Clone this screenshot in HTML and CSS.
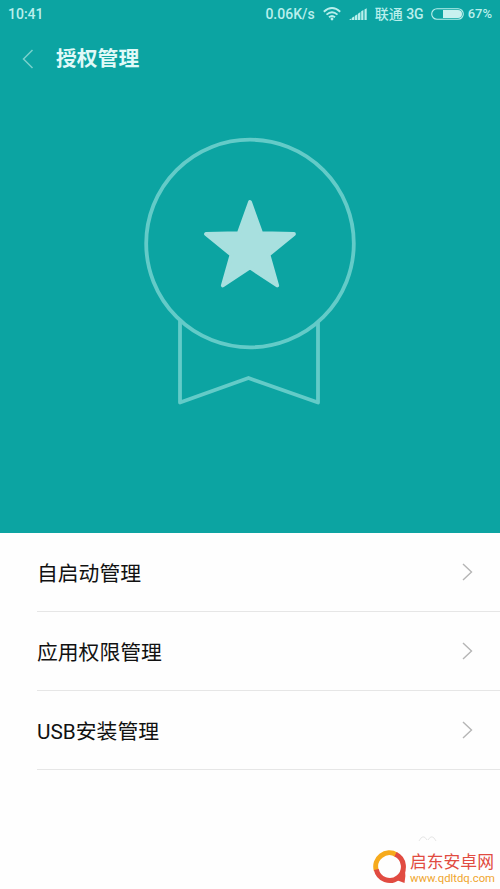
FILE: index.html
```html
<!DOCTYPE html>
<html lang="zh-CN">
<head>
<meta charset="utf-8">
<title>授权管理</title>
<link rel="stylesheet" href="styles.css">
</head>
<body>
<main class="screen">
  <section class="hero">
    <div class="status">
      <span class="time">10:41</span>
      <span class="speed">0.06K/s</span>
      <svg class="wifi" width="18" height="14" viewBox="0 0 18 14" fill="none" stroke="#b9efec" stroke-width="1.9"><path d="M.8 4.800Q9-2.600 17.200 4.800M3.500 7.600Q9 2.800 14.500 7.600M6 10.200Q9 7.700 12 10.200"/><circle cx="9" cy="12" r="1.400" fill="#b9efec" stroke="none"/></svg>
      <svg class="signal" width="18" height="12" viewBox="0 0 18 12" fill="#b9efec"><path d="M0 12l2.500-1.800V12zM3 12V9.700l2.400-1.500V12zM6 12V7.700l2.400-1.500V12zM9 12V5.700l2.400-1.700v8zM12.200 12V3.300l2.200-1.300v10zM15.500 12V1.500l2.200-1.300V12z"/></svg>
      <span class="carrier">联通 3G</span>
      <svg class="battery" width="34" height="12" viewBox="0 0 34 12"><rect x=".7" y=".7" width="31.600" height="10.600" rx="5.300" fill="none" stroke="#b9efec" stroke-width="1.100"/><path d="M12 2h15a4 4 0 0 1 0 8H12z" fill="#c9f1ef"/></svg>
      <span class="percent">67%</span>
    </div>
    <header class="bar">
      <svg class="back" width="12" height="20" viewBox="0 0 12 20" fill="none" stroke="#79d0cc" stroke-width="1.500"><path d="M10.500 1 1.500 10l9 9"/></svg>
      <h1>授权管理</h1>
    </header>
    <svg class="medal" width="212" height="268" viewBox="144 137 212 268" fill="none" stroke="#63cbc8" stroke-width="3.800" stroke-linejoin="round">
      <circle cx="250" cy="243.500" r="103.800"/>
      <path d="M180 320v82.500L248.500 378 318 402.500V321"/>
      <path d="M250 202 261.200 233.200 294 234 268.500 254.800 277.200 285.500 250 267.500 222.800 285.500 231.500 254.800 206 234 238.800 233.200Z" fill="#a8e0df" stroke="#a8e0df"/>
    </svg>
  </section>
  <nav class="list">
    <a class="row"><span>自启动管理</span><svg class="arrow" width="11" height="18" viewBox="0 0 11 18"><path d="m1 1 8.500 8L1 17"/></svg></a>
    <a class="row"><span>应用权限管理</span><svg class="arrow" width="11" height="18" viewBox="0 0 11 18"><path d="m1 1 8.500 8L1 17"/></svg></a>
    <a class="row"><span>USB安装管理</span><svg class="arrow" width="11" height="18" viewBox="0 0 11 18"><path d="m1 1 8.500 8L1 17"/></svg></a>
  </nav>
  <footer class="brand">
    <svg class="paw" width="20" height="8" viewBox="0 0 20 8" fill="none" stroke="#e6e6e6"><path d="M1 6Q5-2 9 5M10 5Q14-2 18 6"/></svg>
    <div class="mark">
      <svg width="34" height="34" viewBox="0 0 34 34" fill="none" stroke-width="5"><path d="M3.300 20.500A13.700 13.700 0 0 1 23.500 4.800" stroke="#f6aa1c"/><path d="M22.500 4.300A13.700 13.700 0 1 1 3.300 19.500" stroke="#e14b41"/><path d="m22 29.500 9.500 3.500q1.500-7 .5-14z" fill="#e14b41"/></svg>
      <div class="words"><b>启东安卓网</b><span>www.qdltdq.com</span></div>
    </div>
  </footer>
</main>
</body>
</html>
```
FILE: styles.css
```css
* { box-sizing: border-box; }
body { margin: 0; background: #fefefe; font-family: Roboto, "Noto Sans CJK SC", sans-serif; }
.screen { width: 500px; height: 889px; overflow: hidden; display: flex; flex-direction: column; }
.hero { height: 533px; flex: none; background: #0ca4a2; display: flex; flex-direction: column; }
.status { height: 28px; flex: none; display: flex; align-items: center; padding: 0 8px; color: #b9efec; font-size: 14px; font-weight: 500; line-height: 20px; white-space: nowrap; }
.time { margin-right: auto; }
.wifi { margin-left: 8px; }
.signal { margin: 0 8px; }
.battery { margin-left: 7px; }
.percent { margin-left: 3px; font-size: 13px; }
.bar { height: 62px; flex: none; display: flex; align-items: center; padding-left: 22px; }
h1 { margin: 0 0 0 22px; font-size: 20.8px; line-height: 30px; font-weight: 700; color: #e0faf8; }
.medal { margin: 47px auto 0; flex: none; }
.row { height: 79px; margin-left: 37px; padding-right: 27px; border-bottom: 1px solid #e6e6e6; display: flex; align-items: center; justify-content: space-between; font-size: 20.8px; line-height: 30px; color: #111; }
.row span { padding-top: 3px; }
.arrow { fill: none; stroke: #b5b5b5; stroke-width: 1.4; }
.brand { margin: auto 4px 0 auto; width: 123px; height: 54px; }
.paw { display: block; margin-left: 45px; }
.mark { display: flex; margin-top: 8px; gap: 3px; }
.mark svg { flex: none; margin-top: -1px; }
.words { display: flex; flex-direction: column; color: #e14b41; white-space: nowrap; }
.words b { font-size: 16.8px; line-height: 23px; font-weight: 400; }
.words span { font-size: 11.3px; line-height: 10px; color: #f0a52c; }
```
